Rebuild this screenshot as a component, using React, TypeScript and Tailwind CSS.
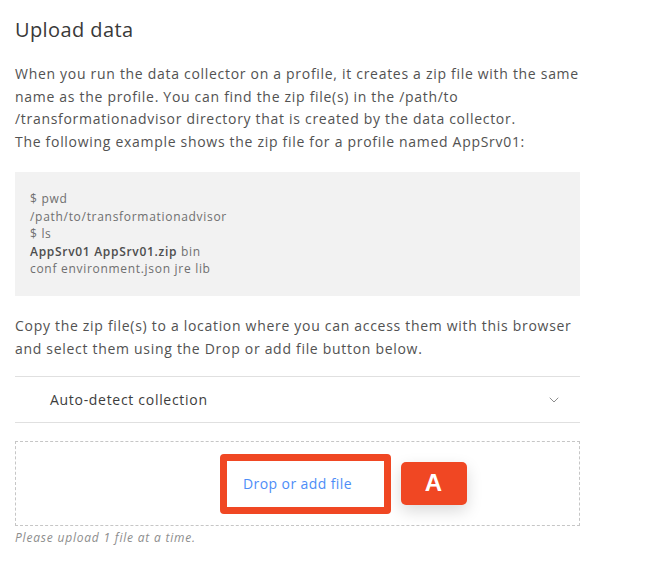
import { ChevronDown } from 'lucide-react'

export default function App() {
  return (
    <div className="w-[670px] h-[564px] bg-white text-[#525252] font-['Open_Sans',sans-serif]">
      <div className="w-[565px] ml-[15px] pt-[16px]">
        <h1 className="text-[20px] leading-[28px] tracking-[0.4px] text-[#393939]">Upload data</h1>

        <p className="mt-[19px] text-[14px] leading-[22.5px] tracking-[0.7px]">
          When you run the data collector on a profile, it creates a zip file with the same name as
          the profile. You can find the zip file(s) in the /path/to /transformationadvisor directory
          that is created by the data collector.
        </p>
        <p className="text-[14px] leading-[22.5px] tracking-[0.7px]">
          The following example shows the zip file for a profile named AppSrv01:
        </p>

        <div className="mt-[19px] h-[124px] bg-[#f2f2f2] pl-[15px] pt-[18px] text-[12px] leading-[17.5px] tracking-[0.7px] text-[#6f6f6f]">
          <div>$ pwd</div>
          <div>/path/to/transformationadvisor</div>
          <div>$ ls</div>
          <div>
            <span className="font-semibold text-[#4d4d4d]">AppSrv01 AppSrv01.zip</span> bin
          </div>
          <div>conf environment.json jre lib</div>
        </div>

        <p className="mt-[19px] text-[14px] leading-[22.5px] tracking-[0.7px]">
          Copy the zip file(s) to a location where you can access them with this browser and select
          them using the Drop or add file button below.
        </p>

        <div className="mt-[16px] h-[47px] border-y border-[#e0e0e0] flex items-center justify-between pl-[35px] pr-[18px]">
          <span className="text-[14px] tracking-[0.7px] text-[#3d3d3d]">Auto-detect collection</span>
          <ChevronDown className="w-[16px] h-[16px] text-[#8d8d8d]" strokeWidth={1.5} />
        </div>

        <div className="mt-[18px] h-[85px] border border-dashed border-[#c6c6c6] flex items-center justify-center">
          <div className="relative ml-[15px] w-[171px] h-[60px] border-[7px] border-[#f04723] rounded-[4px] flex items-center justify-center">
            <span className="mr-[15px] text-[14px] tracking-[0.4px] text-[#4d8df7]">Drop or add file</span>
            <div className="absolute left-[174px] top-[1px] w-[66px] h-[43px] bg-[#f04723] rounded-[5px] flex items-center justify-center text-white font-bold text-[24px] font-['Liberation_Sans',sans-serif] shadow-[0_6px_16px_rgba(0,0,0,0.15)]">
              A
            </div>
          </div>
        </div>

        <p className="mt-[3px] text-[12px] italic tracking-[0.8px] text-[#8d8d8d]">Please upload 1 file at a time.</p>
      </div>
    </div>
  )
}
